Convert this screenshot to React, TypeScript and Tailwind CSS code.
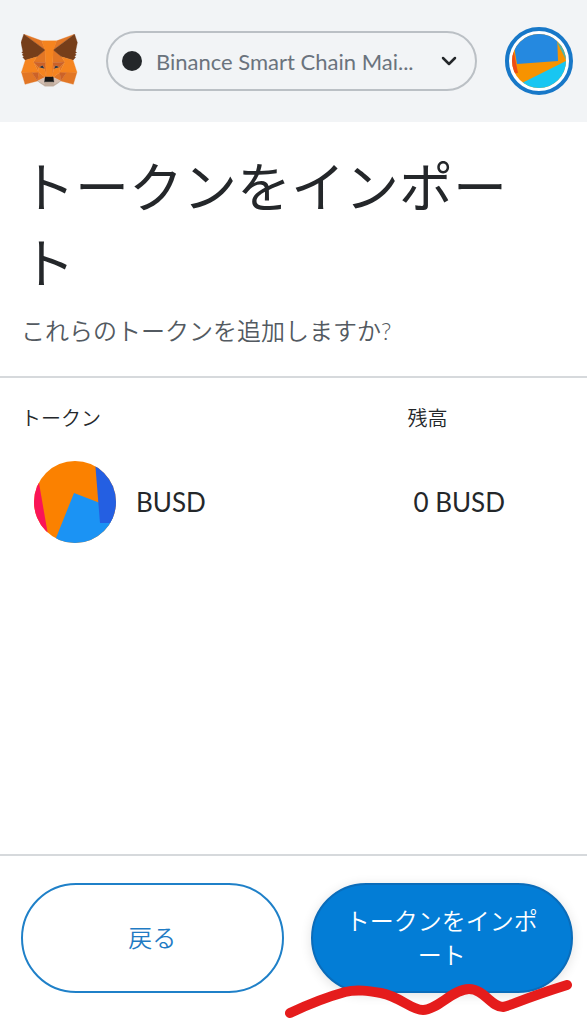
import { ChevronDown } from "lucide-react";

const tokens = [{ symbol: "BUSD", balance: "0 BUSD" }];

const FoxLogo = () => (
  <svg
    viewBox="1 1 34 32"
    className="h-[54px] w-[57px] shrink-0"
    strokeWidth="0.2"
    strokeLinejoin="round"
    aria-hidden="true"
  >
    <path d="m32.9582 1-13.1341 9.7183 2.4424-5.72731z" fill="#e17726" stroke="#e17726" />
    <g fill="#e27625" stroke="#e27625">
      <path d="m2.66296 1 13.01714 9.809-2.3254-5.81802z" />
      <path d="m28.2295 23.5335-3.4947 5.3386 7.4829 2.0603 2.1436-7.2823z" />
      <path d="m1.27281 23.6501 2.13055 7.2823 7.46994-2.0603-3.48166-5.3386z" />
      <path d="m10.4706 14.5149-2.0786 3.1358 7.405.3369-.2469-7.969z" />
      <path d="m25.1505 14.5149-5.1575-4.58704-.1688 8.05974 7.4049-.3369z" />
      <path d="m10.8733 28.8721 4.4819-2.1639-3.8583-3.0062z" />
      <path d="m20.2659 26.7082 4.4689 2.1639-.6105-5.1701z" />
    </g>
    <g fill="#d5bfb2" stroke="#d5bfb2">
      <path d="m24.7348 28.8721-4.469-2.1639.3638 2.9025-.039 1.231z" />
      <path d="m10.8732 28.8721 4.1572 1.9696-.026-1.231.3508-2.9025z" />
    </g>
    <g fill="#233447" stroke="#233447">
      <path d="m15.1084 21.7842-3.7155-1.0884 2.6243-1.2051z" />
      <path d="m20.5126 21.7842 1.0913-2.2935 2.6372 1.2051z" />
    </g>
    <g fill="#cc6228" stroke="#cc6228">
      <path d="m10.8733 28.8721.6495-5.3386-4.13117.1167z" />
      <path d="m24.0982 23.5335.6366 5.3386 3.4946-5.2219z" />
      <path d="m27.2291 17.6507-7.405.3369.6885 3.7966 1.0913-2.2935 2.6372 1.2051z" />
      <path d="m11.3929 20.6958 2.6242-1.2051 1.0913 2.2935.6885-3.7966-7.40495-.3369z" />
    </g>
    <g fill="#e27525" stroke="#e27525">
      <path d="m8.392 17.6507 3.1049 6.0513-.1039-3.0062z" />
      <path d="m24.2412 20.6958-.1169 3.0062 3.1049-6.0513z" />
      <path d="m15.797 17.9876-.6886 3.7967.8704 4.4833.1949-5.9087z" />
      <path d="m19.8242 17.9876-.3638 2.3584.1819 5.9216.8704-4.4833z" />
    </g>
    <g fill="#f5841f" stroke="#f5841f">
      <path d="m20.5127 21.7842-.8704 4.4834.6236.4406 3.8584-3.0062.1169-3.0062z" />
      <path d="m11.3929 20.6958.104 3.0062 3.8583 3.0062.6236-.4406-.8704-4.4834z" />
    </g>
    <path
      d="m20.5906 30.8417.039-1.231-.3378-.2851h-4.9626l-.3248.2851.026 1.231-4.1572-1.9696 1.4551 1.1921 2.9489 2.0344h5.0536l2.962-2.0344 1.442-1.1921z"
      fill="#c0ac9d"
      stroke="#c0ac9d"
    />
    <path
      d="m20.2659 26.7082-.6236-.4406h-3.6635l-.6236.4406-.3508 2.9025.3248-.2851h4.9626l.3378.2851z"
      fill="#161616"
      stroke="#161616"
    />
    <g fill="#763e1a" stroke="#763e1a">
      <path d="m33.5168 11.3532 1.1043-5.36447-1.6629-4.98873-12.6923 9.3944 4.8846 4.1205 6.8983 2.0085 1.52-1.7752-.6626-.4795 1.0523-.9588-.8054-.622 1.0523-.8034z" />
      <path d="m1 5.98873 1.11724 5.36447-.71451.5313 1.06527.8034-.80545.622 1.05228.9588-.66255.4795 1.51997 1.7752 6.89835-2.0085 4.8846-4.1205-12.69233-9.3944z" />
    </g>
    <g fill="#f5841f" stroke="#f5841f">
      <path d="m32.0489 16.5234-6.8983-2.0085 2.0786 3.1358-3.1049 6.0513 4.1052-.0519h6.1318z" />
      <path d="m10.4705 14.5149-6.89828 2.0085-2.29944 7.1267h6.11883l4.10519.0519-3.10487-6.0513z" />
      <path d="m19.8241 17.9876.4417-7.5932 2.0007-5.4034h-8.9119l2.0006 5.4034.4417 7.5932.1689 2.3842.013 5.8958h3.6635l.013-5.8958z" />
    </g>
  </svg>
);

const AccountIcon = () => (
  <svg viewBox="0 0 54 54" className="size-[54px] rounded-full" aria-hidden="true">
    <rect width="54" height="54" fill="#f79300" />
    <path d="M0 0H45L46 27L5 30Z" fill="#2589e0" />
    <path d="M45 8L54 14V26L51 20Z" fill="#4fb3a8" />
    <path d="M0 14L2 19L6 39L0 40Z" fill="#ee4c14" />
    <path d="M54 27L10 49V54H54Z" fill="#18c6f2" />
  </svg>
);

const TokenIcon = () => (
  <svg viewBox="0 0 82 82" className="size-[82px] shrink-0 rounded-full" aria-hidden="true">
    <rect width="82" height="82" fill="#fb8100" />
    <path d="M0 16L5 22L14 74L0 74Z" fill="#fa1458" />
    <path d="M40 32L66 42L82 60V82H20Z" fill="#1b93f4" />
    <path d="M61 0H82V62H66Z" fill="#245fe2" />
  </svg>
);

const Underline = () => (
  <svg
    viewBox="0 0 288 40"
    className="pointer-events-none absolute right-0 -bottom-[27px] h-10 w-[288px] max-w-none"
    aria-hidden="true"
  >
    <path
      d="M5 33C24 24 42 17 60 12C72 9 84 11 96 13C116 17 126 30 138 30C152 30 168 9 184 9C199 9 206 27 218 27C228 25 234 20 282 5"
      fill="none"
      stroke="#e51c1c"
      strokeWidth="10"
      strokeLinecap="round"
      strokeLinejoin="round"
    />
  </svg>
);

const App = () => {
  return (
    <div
      lang="ja"
      className="flex min-h-screen flex-col bg-white font-[Lato,'Noto_Sans_CJK_JP',sans-serif] text-[#24272a]"
    >
      <header className="flex h-[122px] items-center gap-7 bg-[#f2f4f6] pr-3.5 pl-[21px]">
        <FoxLogo />
        <button
          type="button"
          className="flex h-[60px] min-w-0 flex-1 items-center rounded-full border-2 border-[#bbc0c5] px-3.5 text-left text-[22px] text-[#6a737d]"
        >
          <span className="mr-3.5 size-5 shrink-0 rounded-full bg-[#24272a]" />
          <span className="min-w-0 flex-1 whitespace-nowrap">Binance Smart Chain Mai...</span>
          <ChevronDown className="size-6 shrink-0 text-[#24272a]" strokeWidth={2.5} />
        </button>
        <button
          type="button"
          aria-label="アカウント"
          className="flex size-[68px] shrink-0 items-center justify-center rounded-full border-4 border-[#1878c8] bg-white"
        >
          <AccountIcon />
        </button>
      </header>

      <section className="border-b-2 border-[#d6d9dc] px-[21px] pt-7 pb-7">
        <h1 className="pr-8 text-[54px] leading-[76px] [line-break:anywhere]">トークンをインポート</h1>
        <p className="mt-3 text-2xl leading-[34px] font-[350] text-[#535a61]">これらのトークンを追加しますか?</p>
      </section>

      <main className="flex-1 pt-6 pr-3.5 pl-[21px]">
        <table className="w-full table-fixed text-left">
          <thead>
            <tr className="text-xl leading-8">
              <th className="w-[70%] font-[350]">トークン</th>
              <th className="font-[350]">残高</th>
            </tr>
          </thead>
          <tbody className="text-[26px]">
            {tokens.map((token) => (
              <tr key={token.symbol}>
                <td className="pt-[27px] pl-[13px]">
                  <div className="flex items-center gap-5">
                    <TokenIcon />
                    <span>{token.symbol}</span>
                  </div>
                </td>
                <td className="pt-[27px] pl-1.5">{token.balance}</td>
              </tr>
            ))}
          </tbody>
        </table>
      </main>

      <footer className="grid grid-cols-2 gap-[27px] border-t-2 border-[#d6d9dc] pt-[27px] pr-3.5 pb-[31px] pl-[21px] text-2xl leading-[34px] font-[350]">
        <button
          type="button"
          className="h-[110px] rounded-full border-2 border-[#1f80c8] px-8 text-[#1f7bc4]"
        >
          戻る
        </button>
        <div className="relative">
          <button
            type="button"
            className="h-[110px] w-full rounded-full border-2 border-[#0a6cba] bg-[#037dd6] px-8 text-white shadow-[0_2px_12px_rgba(0,0,0,0.12)] [line-break:anywhere]"
          >
            トークンをインポート
          </button>
          <Underline />
        </div>
      </footer>
    </div>
  );
};

export default App;
